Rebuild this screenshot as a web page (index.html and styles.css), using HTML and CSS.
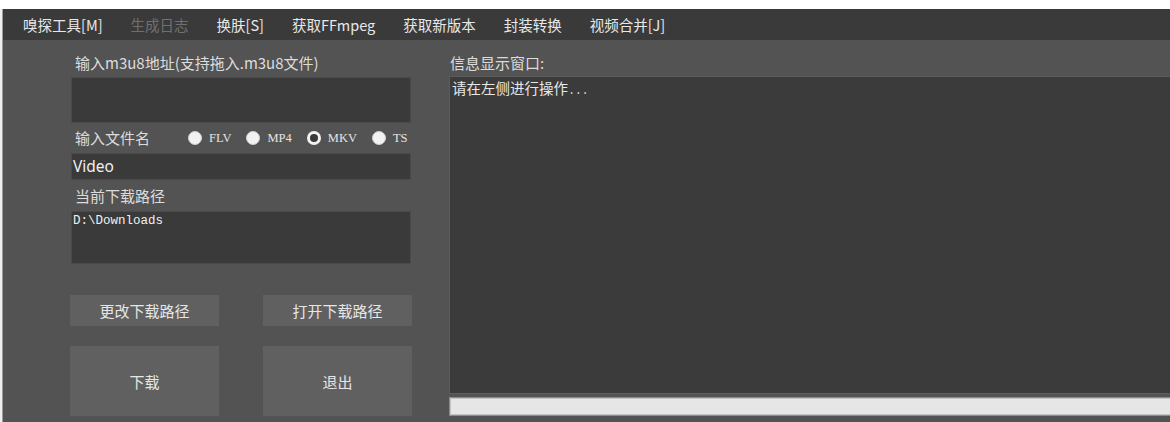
FILE: index.html
```html
<!DOCTYPE html>
<html lang="zh-CN">

<head>
    <meta charset="UTF-8">
    <meta name="viewport" content="width=device-width, initial-scale=1.0">
    <title>m3u8下载器</title>
    <link rel="stylesheet" href="styles.css">
</head>

<body>
    <div class="desktop">
        <div class="top-strip"></div>
        <div class="window-row">
            <div class="behind-edge"></div>
            <div class="app">
                <!-- 顶部菜单 -->
                <nav class="menubar">
                    <span class="menu-item">嗅探工具[M]</span>
                    <span class="menu-item disabled">生成日志</span>
                    <span class="menu-item">换肤[S]</span>
                    <span class="menu-item">获取FFmpeg</span>
                    <span class="menu-item">获取新版本</span>
                    <span class="menu-item">封装转换</span>
                    <span class="menu-item">视频合并[J]</span>
                </nav>

                <main class="content">
                    <!-- 左侧：输入区 -->
                    <section class="left-pane">
                        <div class="field-label">输入m3u8地址(支持拖入.m3u8文件)</div>
                        <div class="box box-url"></div>

                        <div class="name-row">
                            <span class="field-label name-label">输入文件名</span>
                            <div class="radios">
                                <label class="radio"><span class="dot"></span>FLV</label>
                                <label class="radio"><span class="dot"></span>MP4</label>
                                <label class="radio"><span class="dot checked"></span>MKV</label>
                                <label class="radio"><span class="dot"></span>TS</label>
                            </div>
                        </div>
                        <div class="box box-name">Video</div>

                        <div class="field-label path-label">当前下载路径</div>
                        <div class="box box-path">D:\Downloads</div>

                        <div class="buttons">
                            <div class="btn btn-small">更改下载路径</div>
                            <div class="btn btn-small">打开下载路径</div>
                            <div class="btn btn-big">下载</div>
                            <div class="btn btn-big">退出</div>
                        </div>
                    </section>

                    <!-- 右侧：信息窗口 -->
                    <section class="right-pane">
                        <div class="field-label info-label">信息显示窗口:</div>
                        <div class="log">请在左侧进行操作<span class="dots">...</span></div>
                        <div class="progress"></div>
                    </section>
                </main>
            </div>
        </div>
    </div>
</body>

</html>
```

FILE: styles.css
```css
* {
    box-sizing: border-box;
}

body {
    margin: 0;
    background: #fff;
    font-family: "Noto Sans CJK SC", "Noto Sans", sans-serif;
    overflow: hidden;
}

.desktop {
    width: 1170px;
    height: 422px;
    display: flex;
    flex-direction: column;
}

.top-strip {
    height: 9px;
    background: #fff;
}

.window-row {
    flex: 1;
    display: flex;
    min-height: 0;
}

/* 后面窗口露出的一条边 */
.behind-edge {
    width: 3px;
    background: #efefef;
    border-right: 1px solid #9c9c9c;
}

.app {
    flex: 1;
    display: flex;
    flex-direction: column;
    background: #535353;
    overflow: hidden;
}

/* 菜单 */
.menubar {
    height: 31px;
    background: #3a3a3a;
    display: flex;
    align-items: center;
    gap: 28px;
    padding-left: 20px;
    font-size: 14.5px;
    color: #e8e8e8;
}

.menu-item {
    line-height: 20px;
    white-space: nowrap;
}

.menu-item.disabled {
    color: #707070;
}

.content {
    flex: 1;
    display: flex;
}

.field-label {
    height: 20px;
    line-height: 20px;
    padding-left: 5px;
    font-size: 15px;
    color: #dcdcdc;
    white-space: nowrap;
}

/* 左侧 */
.left-pane {
    width: 409px;
    padding: 13px 0 0 67px;
}

.box {
    margin: 0 1px;
    background: #3a3a3a;
    border: 1px solid #4a4a4a;
    color: #f0f0f0;
}

.box-url {
    margin-top: 4px;
    height: 46px;
}

.name-row {
    height: 30px;
    display: flex;
    align-items: center;
}

.name-label {
    width: 118px;
}

.radios {
    display: flex;
    gap: 15px;
}

.radio {
    display: flex;
    align-items: center;
    gap: 7px;
    font-family: "Liberation Serif", serif;
    font-size: 12.5px;
    color: #e4e4e4;
}

.dot {
    width: 14px;
    height: 14px;
    border-radius: 50%;
    background: #f2f2f2;
    border: 1px solid #d0d0d0;
}

.dot.checked {
    background: #3a3a3a;
    border: 3px solid #f2f2f2;
}

.box-name {
    height: 27px;
    line-height: 24px;
    padding-left: 1px;
    font-family: "Noto Sans", sans-serif;
    font-size: 15.5px;
}

.path-label {
    height: 31px;
    line-height: 31px;
}

.box-path {
    height: 53px;
    padding: 1px 0 0 1px;
    font-family: "Liberation Mono", monospace;
    font-size: 12.5px;
    line-height: 16px;
}

.buttons {
    margin-top: 31px;
    display: grid;
    grid-template-columns: 149px 149px;
    grid-template-rows: 31px 70px;
    column-gap: 44px;
    row-gap: 20px;
}

.btn {
    display: flex;
    align-items: center;
    justify-content: center;
    background: #606060;
    color: #e6e6e6;
    font-size: 15px;
}

/* 右侧 */
.right-pane {
    flex: 1;
    margin: 0 -4px 0 37px;
    padding-top: 13px;
}

.info-label {
    padding-left: 1px;
}

.log {
    margin-top: 3px;
    height: 318px;
    background: #3b3b3b;
    border: 1px solid #5c5c5c;
    padding: 2px 0 0 2px;
    font-size: 14.5px;
    line-height: 18px;
    color: #e8e8e8;
}

.dots {
    font-family: "Liberation Mono", monospace;
    font-size: 12px;
    letter-spacing: -0.5px;
    color: #cfcfcf;
}

.progress {
    margin-top: 3px;
    height: 19px;
    background: #e6e6e6;
    border: 1px solid #8c8c8c;
    box-shadow: inset 0 0 0 1px #c4c4c4;
}
```
